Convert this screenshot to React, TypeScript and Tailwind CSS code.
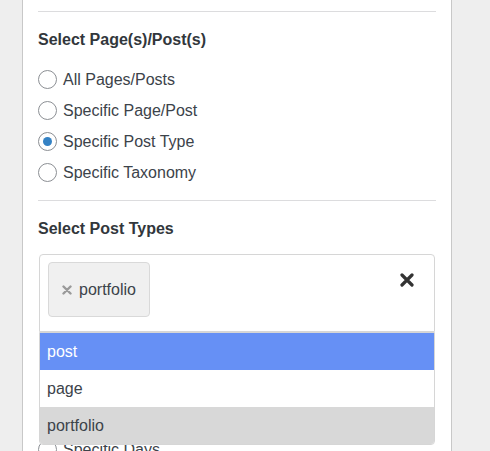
import React from 'react';

const font = { fontFamily: '"Liberation Sans", Arial, sans-serif' };

const Radio: React.FC<{ label: string; checked?: boolean }> = ({ label, checked }) => (
  <label className="flex items-center h-[31px] gap-[6px] text-[16px] text-[#3c434a]">
    <span className="w-[19px] h-[19px] rounded-full border border-[#8c8f94] bg-white flex items-center justify-center shrink-0">
      {checked && <span className="w-[9px] h-[9px] rounded-full bg-[#3582c4]" />}
    </span>
    <span>{label}</span>
  </label>
);

const App: React.FC = () => {
  return (
    <div className="h-[451px] overflow-hidden bg-[#eeeeee] pl-[22px]" style={font}>
      <div className="w-[430px] h-full bg-white border-x border-[#c8c8c8] px-[15px] pt-[11px]">
        <div className="border-t border-[#dcdcde]" />

        <h3 className="mt-[18px] text-[16px] leading-[20px] font-bold text-[#32373c]">Select Page(s)/Post(s)</h3>
        <div className="mt-[14px] flex flex-col">
          <Radio label="All Pages/Posts" />
          <Radio label="Specific Page/Post" />
          <Radio label="Specific Post Type" checked />
          <Radio label="Specific Taxonomy" />
        </div>

        <div className="mt-[12px] border-t border-[#dcdcde]" />

        <h3 className="mt-[18px] text-[16px] leading-[20px] font-bold text-[#32373c]">Select Post Types</h3>

        <div className="relative mt-[15px] mx-px">
          <div className="h-[78px] flex items-start border border-[#d6d6d6] rounded-t-[4px] bg-white pt-[7px] pl-[8px]">
            <span className="h-[55px] flex items-center gap-[7px] px-[13px] bg-[#f0f0f0] border border-[#d9d9d9] rounded-[4px] text-[16px] text-[#3c434a]">
              <svg width="10" height="10" viewBox="0 0 10 10">
                <path d="M1.5 1.5L8.5 8.5M8.5 1.5L1.5 8.5" stroke="#9a9a9a" strokeWidth="2.4" strokeLinecap="round" />
              </svg>
              portfolio
            </span>
            <svg className="ml-auto mt-[11px] mr-[20px]" width="14" height="14" viewBox="0 0 14 14">
              <path d="M2 2L12 12M12 2L2 12" stroke="#333333" strokeWidth="3.2" strokeLinecap="round" />
            </svg>
          </div>

          <ul className="absolute top-full left-0 right-0 z-10 border border-[#d6d6d6] rounded-b-[4px] overflow-hidden bg-white text-[16px]">
            <li className="h-[37px] flex items-center px-[7px] bg-[#6690f5] text-white">post</li>
            <li className="h-[37px] flex items-center px-[7px] text-[#3c434a]">page</li>
            <li className="h-[37px] flex items-center px-[7px] bg-[#d8d8d8] text-[#3c434a]">portfolio</li>
          </ul>
        </div>

        <div className="mt-[102px] flex flex-col">
          <Radio label="Specific Days" />
        </div>
      </div>
    </div>
  );
};

export default App;
